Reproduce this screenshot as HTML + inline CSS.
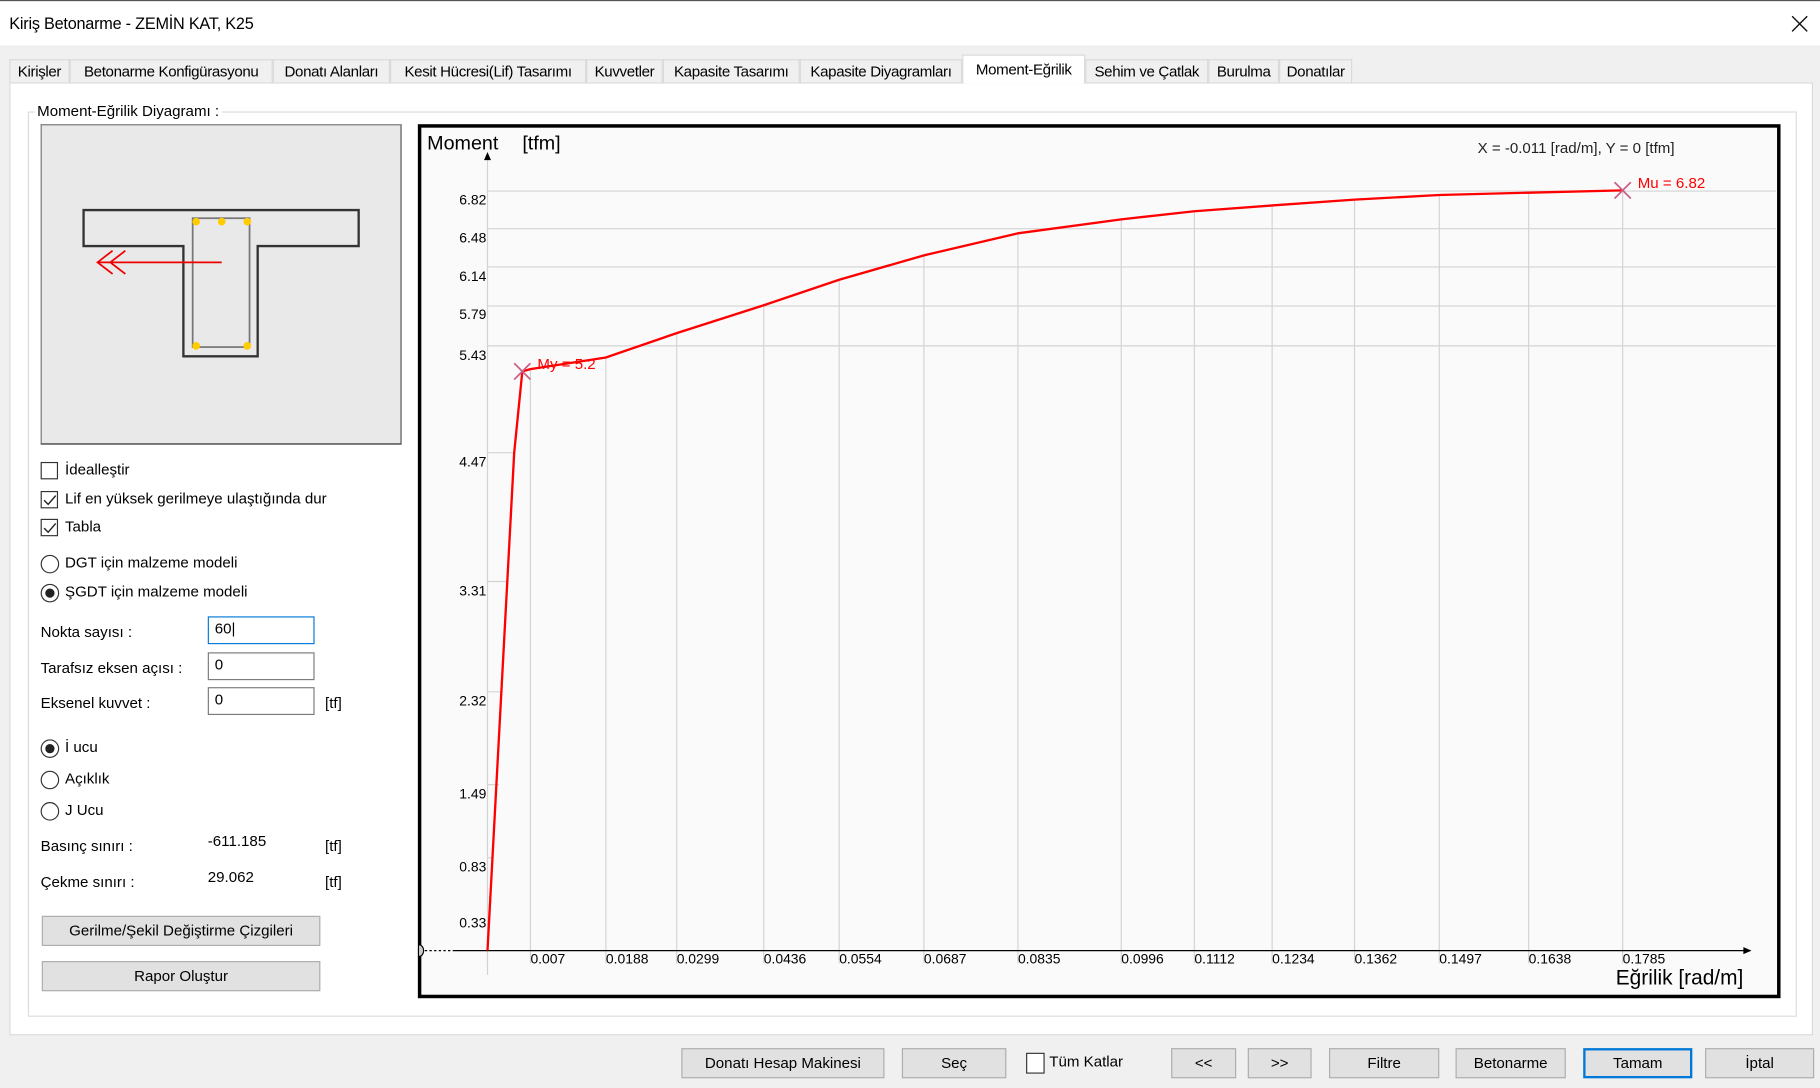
<!DOCTYPE html>
<html><head><meta charset="utf-8">
<style>
html,body{margin:0;padding:0;width:1820px;height:1088px;overflow:hidden;background:#f0f0f0;}
#w{position:absolute;left:0;top:0;width:1568px;height:937px;transform:scale(1.16071);transform-origin:0 0;font-family:"Liberation Sans",sans-serif;font-size:13px;color:#000;}
.a{position:absolute;white-space:nowrap;line-height:16px;}
.tab{position:absolute;top:51px;height:20px;border:1px solid #d9d9d9;border-bottom:none;background:#f0f0f0;line-height:20px;text-align:center;font-size:13px;letter-spacing:-0.3px;box-sizing:border-box;}
.cb{position:absolute;width:15px;height:15px;border:1px solid #333;background:#fff;box-sizing:border-box;}
.rb{position:absolute;width:16px;height:16px;border:1px solid #333;border-radius:50%;background:#fff;box-sizing:border-box;}
.rb.on::after{content:"";position:absolute;left:3px;top:3px;width:8px;height:8px;border-radius:50%;background:#222;}
.inp{position:absolute;width:92px;height:24px;border:1px solid #7a7a7a;background:#fff;box-sizing:border-box;padding-left:5px;line-height:20px;}
.btn{position:absolute;height:26px;border:1px solid #adadad;background:#e1e1e1;box-sizing:border-box;text-align:center;line-height:24px;font-size:13px;}
</style></head><body>
<div id="w">
<div style="position:absolute;left:0;top:0;width:1568px;height:39px;background:#fff;border-top:1px solid #555;box-sizing:border-box"></div>
<div class="a" style="left:8px;top:12px;font-size:14px;letter-spacing:-0.2px">Kiriş Betonarme - ZEMİN KAT, K25</div>
<svg style="position:absolute;left:1543px;top:13px" width="15" height="15"><path d="M1 1L14 14M14 1L1 14" stroke="#111" stroke-width="1.2"/></svg>

<div style="position:absolute;left:8px;top:71px;width:1554px;height:821px;background:#fff;border:1px solid #d9d9d9;box-sizing:border-box"></div>
<div class="tab" style="left:8px;width:52px">Kirişler</div>
<div class="tab" style="left:60px;width:175px">Betonarme Konfigürasyonu</div>
<div class="tab" style="left:235px;width:101px">Donatı Alanları</div>
<div class="tab" style="left:336px;width:169px">Kesit Hücresi(Lif) Tasarımı</div>
<div class="tab" style="left:505px;width:66px">Kuvvetler</div>
<div class="tab" style="left:571px;width:118px">Kapasite Tasarımı</div>
<div class="tab" style="left:689px;width:140px">Kapasite Diyagramları</div>
<div class="tab" style="left:829px;width:106px;top:47px;height:25px;background:#fff;line-height:24px">Moment-Eğrilik</div>
<div class="tab" style="left:935px;width:106px">Sehim ve Çatlak</div>
<div class="tab" style="left:1041px;width:61px">Burulma</div>
<div class="tab" style="left:1102px;width:63px">Donatılar</div>

<div style="position:absolute;left:24px;top:96px;width:1524px;height:780px;border:1px solid #dcdcdc;box-sizing:border-box"></div>
<div class="a" style="left:30px;top:88px;background:#fff;padding:0 2px;font-size:13px">Moment-Eğrilik Diyagramı :</div>

<div style="position:absolute;left:35px;top:107px;width:311px;height:276px;background:#e9e9e9;border:1px solid #777;border-bottom-color:#222;border-right-color:#555;box-sizing:border-box"></div>
<svg style="position:absolute;left:0;top:0" width="360" height="400">
<path d="M72 181H309V212H222V307H158V212H72Z" fill="none" stroke="#333" stroke-width="2"/>
<rect x="166" y="188" width="49" height="111" fill="none" stroke="#777" stroke-width="1.5"/>
<g fill="#ffcc00"><circle cx="169" cy="191" r="3.3"/><circle cx="191" cy="191" r="3.3"/><circle cx="213" cy="191" r="3.3"/><circle cx="169" cy="298" r="3.3"/><circle cx="213" cy="298" r="3.3"/></g>
<path d="M191 226H84M97 216L84 226L97 236M108 216L95 226L108 236" fill="none" stroke="#e00" stroke-width="1.5"/>
</svg>

<div class="cb" style="left:35px;top:398px"></div><div class="a" style="left:56px;top:397px">İdealleştir</div>
<div class="cb" style="left:35px;top:423px"></div><svg style="position:absolute;left:37px;top:425px" width="12" height="12"><path d="M1 6L4.5 9.5L11 2" fill="none" stroke="#222" stroke-width="1.2"/></svg><div class="a" style="left:56px;top:422px">Lif en yüksek gerilmeye ulaştığında dur</div>
<div class="cb" style="left:35px;top:447px"></div><svg style="position:absolute;left:37px;top:449px" width="12" height="12"><path d="M1 6L4.5 9.5L11 2" fill="none" stroke="#222" stroke-width="1.2"/></svg><div class="a" style="left:56px;top:446px">Tabla</div>
<div class="rb" style="left:35px;top:478px"></div><div class="a" style="left:56px;top:477px">DGT için malzeme modeli</div>
<div class="rb on" style="left:35px;top:503px"></div><div class="a" style="left:56px;top:502px">ŞGDT için malzeme modeli</div>

<div class="a" style="left:35px;top:537px">Nokta sayısı :</div>
<div class="inp" style="left:179px;top:531px;border-color:#0078d7">60|</div>
<div class="a" style="left:35px;top:568px">Tarafsız eksen açısı :</div>
<div class="inp" style="left:179px;top:562px">0</div>
<div class="a" style="left:35px;top:598px">Eksenel kuvvet :</div>
<div class="inp" style="left:179px;top:592px">0</div>
<div class="a" style="left:280px;top:598px">[tf]</div>

<div class="rb on" style="left:35px;top:637px"></div><div class="a" style="left:56px;top:636px">İ ucu</div>
<div class="rb" style="left:35px;top:664px"></div><div class="a" style="left:56px;top:663px">Açıklık</div>
<div class="rb" style="left:35px;top:691px"></div><div class="a" style="left:56px;top:690px">J Ucu</div>
<div class="a" style="left:35px;top:721px">Basınç sınırı :</div><div class="a" style="left:179px;top:717px">-611.185</div><div class="a" style="left:280px;top:721px">[tf]</div>
<div class="a" style="left:35px;top:752px">Çekme sınırı :</div><div class="a" style="left:179px;top:748px">29.062</div><div class="a" style="left:280px;top:752px">[tf]</div>
<div class="btn" style="left:36px;top:789px;width:240px">Gerilme/Şekil Değiştirme Çizgileri</div>
<div class="btn" style="left:36px;top:828px;width:240px">Rapor Oluştur</div>

<div style="position:absolute;left:360px;top:107px;width:1174px;height:753px;background:#fafafa;border:3px solid #000;box-sizing:border-box"></div>
<svg style="position:absolute;left:0;top:0" width="1568" height="937" font-family="Liberation Sans, sans-serif">
<g stroke="#d3d3d3" stroke-width="1">
<path d="M420 164.6H1530M420 197H1530M420 230H1530M420 263.7H1530M420 298H1530M420 390H443M420 501H438M420 596H433M420 676H430M420 739H425M420 787H422"/>
<path d="M420 819V840M457 318V830M522 308V830M583 287V830M658 263V830M723 241V830M796 220V830M877 201V830M966 189V830M1029 182V830M1096 177V830M1167 172V830M1240 168V830M1317 166V830M1398 164V830"/>
</g>
<path d="M420 819V133" stroke="#d3d3d3"/>
<path d="M417 138L420 131L423 138Z" fill="#000"/>
<path d="M390 819H1508" stroke="#000"/>
<path d="M1502 816L1509 819L1502 822Z" fill="#000"/>
<path d="M362 819H390" stroke="#000" stroke-dasharray="2,2"/>
<path d="M361 814A4 5 0 0 1 361 824" fill="#ccc" stroke="#000"/>
<g font-size="12" text-anchor="end" fill="#000">
<text x="419" y="176">6.82</text><text x="419" y="209">6.48</text><text x="419" y="242">6.14</text><text x="419" y="275">5.79</text><text x="419" y="310">5.43</text><text x="419" y="402">4.47</text><text x="419" y="513">3.31</text><text x="419" y="608">2.32</text><text x="419" y="688">1.49</text><text x="419" y="751">0.83</text><text x="419" y="799">0.33</text>
</g>
<g font-size="12" fill="#000">
<text x="457" y="830">0.007</text><text x="522" y="830">0.0188</text><text x="583" y="830">0.0299</text><text x="658" y="830">0.0436</text><text x="723" y="830">0.0554</text><text x="796" y="830">0.0687</text><text x="877" y="830">0.0835</text><text x="966" y="830">0.0996</text><text x="1029" y="830">0.1112</text><text x="1096" y="830">0.1234</text><text x="1167" y="830">0.1362</text><text x="1240" y="830">0.1497</text><text x="1317" y="830">0.1638</text><text x="1398" y="830">0.1785</text>
</g>
<polyline points="420,819 443,390 450,320 457,318 522,308 583,287 658,263 723,241 796,220 877,201 966,189 1029,182 1096,177 1167,172 1240,168 1317,166 1398,164" fill="none" stroke="#f00" stroke-width="2"/>
<path d="M443 313L457 327M457 313L443 327M1391 157L1405 171M1405 157L1391 171" stroke="#c8608a" stroke-width="1.5"/>
<text x="463" y="318" font-size="13" fill="#f00">My = 5.2</text>
<text x="1411" y="162" font-size="13" fill="#f00">Mu = 6.82</text>
<text x="1273" y="132" font-size="13" fill="#222">X = -0.011 [rad/m],  Y = 0 [tfm]</text>
<text x="368" y="129" font-size="17" fill="#000">Moment</text><text x="450" y="129" font-size="17" fill="#000">[tfm]</text>
<text x="1392" y="848" font-size="18" fill="#000">Eğrilik [rad/m]</text>
</svg>

<div class="btn" style="left:587px;top:903px;width:175px">Donatı Hesap Makinesi</div>
<div class="btn" style="left:777px;top:903px;width:90px">Seç</div>
<div class="cb" style="left:884px;top:907px;width:16px;height:18px"></div>
<div class="a" style="left:904px;top:907px">Tüm Katlar</div>
<div class="btn" style="left:1009px;top:903px;width:56px">&lt;&lt;</div>
<div class="btn" style="left:1075px;top:903px;width:55px">&gt;&gt;</div>
<div class="btn" style="left:1145px;top:903px;width:95px">Filtre</div>
<div class="btn" style="left:1254px;top:903px;width:95px">Betonarme</div>
<div class="btn" style="left:1364px;top:903px;width:94px;border:2px solid #0078d7;line-height:22px">Tamam</div>
<div class="btn" style="left:1469px;top:903px;width:94px">İptal</div>
</div>
</body></html>
